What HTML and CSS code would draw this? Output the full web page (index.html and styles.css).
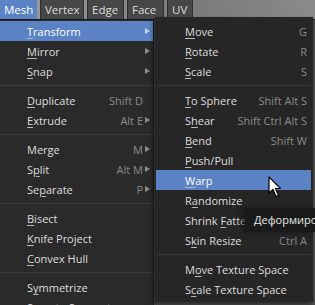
FILE: index.html
```html
<!DOCTYPE html>
<html lang="en">
<head>
    <meta charset="UTF-8">
    <title>Mesh Menu</title>
    <link rel="stylesheet" href="styles.css">
</head>
<body>
    <div class="header">
        <div class="tab active">Mesh</div>
        <div class="tab tab-vertex">Vertex</div>
        <div class="tab">Edge</div>
        <div class="tab">Face</div>
        <div class="tab tab-uv">UV</div>
    </div>
    <div class="menu main-menu">
        <div class="item active"><span class="label"><u>T</u>ransform</span><span class="arrow"></span></div>
        <div class="item"><span class="label"><u>M</u>irror</span><span class="arrow"></span></div>
        <div class="item"><span class="label"><u>S</u>nap</span><span class="arrow"></span></div>
        <div class="sep"></div>
        <div class="item"><span class="label"><u>D</u>uplicate</span><span class="key">Shift D</span><span class="arrow none"></span></div>
        <div class="item"><span class="label"><u>E</u>xtrude</span><span class="key">Alt E</span><span class="arrow"></span></div>
        <div class="sep"></div>
        <div class="item"><span class="label">Mer<u>g</u>e</span><span class="key">M</span><span class="arrow"></span></div>
        <div class="item"><span class="label">S<u>p</u>lit</span><span class="key">Alt M</span><span class="arrow"></span></div>
        <div class="item"><span class="label">Se<u>p</u>arate</span><span class="key">P</span><span class="arrow"></span></div>
        <div class="sep"></div>
        <div class="item"><span class="label"><u>B</u>isect</span></div>
        <div class="item"><span class="label"><u>K</u>nife Project</span></div>
        <div class="item"><span class="label"><u>C</u>onvex Hull</span></div>
        <div class="sep"></div>
        <div class="item"><span class="label">S<u>y</u>mmetrize</span></div>
        <div class="item"><span class="label">Snap to Symmetry</span></div>
    </div>
    <div class="menu sub-menu">
        <div class="item"><span class="label"><u>M</u>ove</span><span class="key">G</span></div>
        <div class="item"><span class="label"><u>R</u>otate</span><span class="key">R</span></div>
        <div class="item"><span class="label"><u>S</u>cale</span><span class="key">S</span></div>
        <div class="sep"></div>
        <div class="item"><span class="label"><u>T</u>o Sphere</span><span class="key">Shift Alt S</span></div>
        <div class="item"><span class="label">S<u>h</u>ear</span><span class="key">Shift Ctrl Alt S</span></div>
        <div class="item"><span class="label"><u>B</u>end</span><span class="key">Shift W</span></div>
        <div class="item"><span class="label"><u>P</u>ush/Pull</span></div>
        <div class="item active"><span class="label"><u>W</u>arp</span></div>
        <div class="item"><span class="label">R<u>a</u>ndomize</span></div>
        <div class="item"><span class="label">Shrink <u>F</u>atten</span></div>
        <div class="item"><span class="label">S<u>k</u>in Resize</span><span class="key">Ctrl A</span></div>
        <div class="sep"></div>
        <div class="item"><span class="label">M<u>o</u>ve Texture Space</span></div>
        <div class="item"><span class="label">S<u>c</u>ale Texture Space</span></div>
    </div>
    <div class="tooltip">Деформировать</div>
    <svg class="cursor" width="14" height="22" viewBox="0 0 14 22">
        <path d="M1 1 L1 17 L5 13.5 L8 20.5 L10.5 19.5 L7.5 12.5 L12.5 12.5 Z" fill="#ffffff" stroke="#000000" stroke-width="1.2" stroke-linejoin="round"/>
    </svg>
</body>
</html>
```

FILE: styles.css
```css
body {
    margin: 0;
    width: 315px;
    height: 305px;
    overflow: hidden;
    position: relative;
    background: #4a4a4a;
    font-family: "Open Sans", "Noto Sans", sans-serif;
    font-size: 11px;
    color: #dedede;
}
.header {
    display: flex;
    gap: 3px;
    height: 19px;
    background: linear-gradient(90deg, #a0a0a0, #7a7a7a 60%, #8a8a8a);
    border-bottom: 1px solid #1c1c1c;
}
.tab {
    width: 37px;
    box-sizing: border-box;
    padding-left: 4px;
    line-height: 19px;
    font-size: 11.5px;
    color: #dcdcdc;
    background: #474747;
    border-left: 1px solid #2e2e2e;
    border-right: 1px solid #2e2e2e;
}
.tab.active {
    background: #5a82c4;
    color: #ffffff;
    border: none;
    padding-left: 4px;
}
.tab-vertex {
    width: 44px;
}
.tab-uv {
    width: 26px;
}
.menu {
    background: #282828;
}
.main-menu {
    width: 153px;
    height: 285px;
    padding-top: 1px;
    background: #2a2a2a;
    border-right: 1px solid #202020;
}
.item {
    display: flex;
    align-items: center;
    height: 20px;
    padding-left: 27px;
    white-space: nowrap;
}
.item.active {
    background: #5a82c4;
    color: #ffffff;
}
.label {
    flex: 1;
}
u {
    text-decoration-thickness: 1px;
    text-underline-offset: 2px;
    text-decoration-color: #b8b8b8;
}
.key {
    color: #8a8a8a;
}
.arrow {
    width: 0;
    height: 0;
    margin: 0 3px 0 2px;
    border-top: 3.5px solid transparent;
    border-bottom: 3.5px solid transparent;
    border-left: 5px solid #8c8c8c;
}
.arrow.none {
    border-left-color: transparent;
}
.item.active .arrow {
    border-left-color: #c6d3ea;
}
.sep {
    height: 9px;
    display: flex;
    align-items: center;
}
.sep::before {
    content: "";
    flex: 1;
    height: 1px;
    background: #3b3b3b;
}
.sub-menu {
    position: absolute;
    left: 155px;
    top: 17px;
    width: 158px;
    padding: 4px 0 3px;
    background: #262626;
    box-shadow: -2px 2px 4px rgba(0, 0, 0, 0.45);
}
.sub-menu .item {
    margin: 0 2px 0 1px;
    padding-left: 29px;
    padding-right: 4px;
}
.sub-menu .sep {
    margin: 0 2px;
}
.tooltip {
    position: absolute;
    left: 245px;
    top: 208px;
    width: 70px;
    height: 24px;
    box-sizing: border-box;
    padding-left: 9px;
    line-height: 24px;
    overflow: hidden;
    white-space: nowrap;
    background: #1a1a1a;
    color: #e8e8e8;
    box-shadow: -3px 0 6px rgba(20, 20, 20, 0.8);
}
.cursor {
    position: absolute;
    left: 268px;
    top: 176px;
}
```
